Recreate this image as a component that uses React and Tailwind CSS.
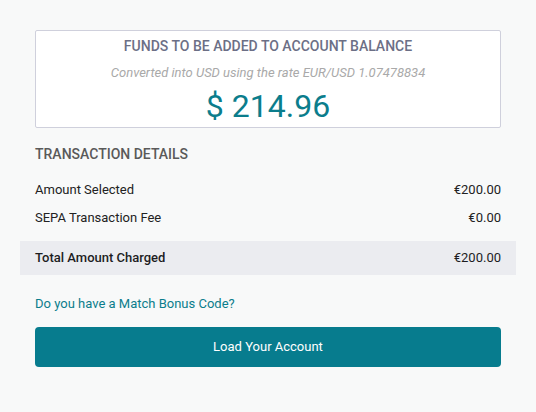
import React from 'react';

const rows = [
  { label: 'Amount Selected', value: '€200.00' },
  { label: 'SEPA Transaction Fee', value: '€0.00' },
];

export default function App() {
  return (
    <div className="min-h-[412px] bg-[#f8f9f9] pt-[30px] px-[20px] font-['Roboto',sans-serif]">
      <div className="px-[15px]">
        <div className="border border-[#cfd0dc] rounded-[2px] bg-white pt-[5px] pb-[1px] text-center">
          <h2 className="text-[14px] leading-[20px] font-medium uppercase text-[#6c6f86]">Funds to be added to account balance</h2>
          <p className="mt-[8px] text-[13px] leading-[18px] italic text-[#a9a9a9]">Converted into USD using the rate EUR/USD 1.07478834</p>
          <p className="mt-[4px] text-[32px] leading-[40px] text-[#0b7d8c]">$ 214.96</p>
        </div>
        <h3 className="mt-[16px] text-[14px] leading-[20px] font-medium uppercase text-[#5a5a5a]">Transaction Details</h3>
      </div>

      <div className="mt-[12px]">
        {rows.map(r => (
          <div key={r.label} className="flex items-center justify-between h-[28px] px-[15px] text-[13px] text-[#222]">
            <span>{r.label}</span>
            <span>{r.value}</span>
          </div>
        ))}
        <div className="mt-[9px] flex items-center justify-between h-[34px] px-[15px] bg-[#ebecf0] text-[13px] text-[#1d1d1f]">
          <span className="font-medium">Total Amount Charged</span>
          <span>€200.00</span>
        </div>
      </div>

      <div className="px-[15px]">
        <a href="#" className="block mt-[19px] text-[13px] leading-[20px] text-[#0b7d8c]">Do you have a Match Bonus Code?</a>
        <button className="mt-[13px] w-full h-[40px] rounded-[4px] bg-[#077c8e] text-white text-[13px]">Load Your Account</button>
      </div>
    </div>
  );
}
